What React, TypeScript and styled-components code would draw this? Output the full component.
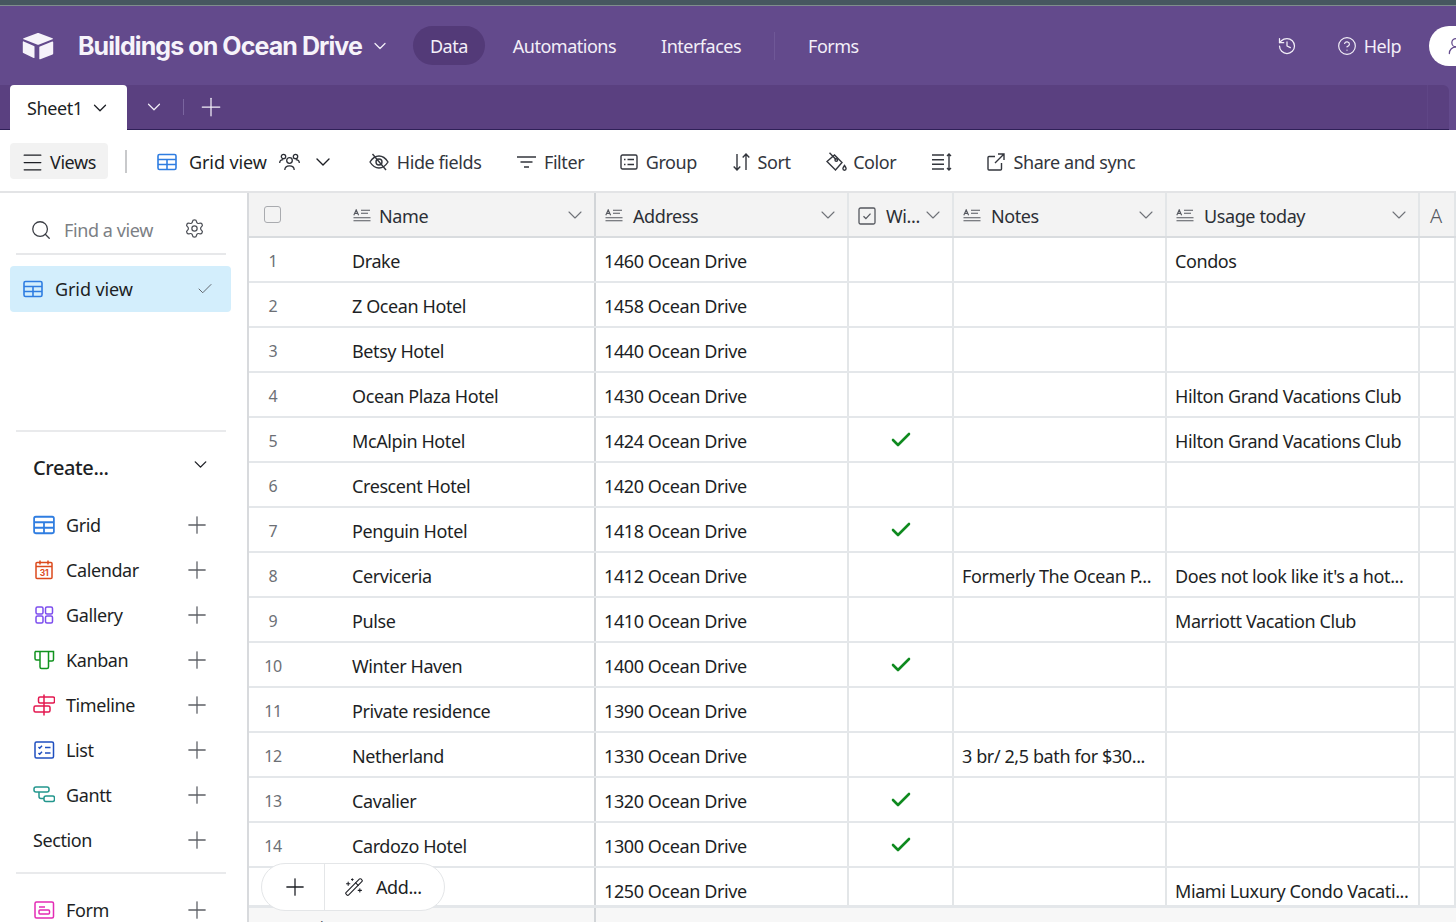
import React from 'react';
import styled, { createGlobalStyle } from 'styled-components';
import {
  Check,
  ChevronDown,
  CircleHelp,
  History,
  Menu,
  Plus,
  Search,
  Settings,
  UserRound,
  WandSparkles,
} from 'lucide-react';

type Row = {
  name: string;
  address: string;
  checked?: boolean;
  notes?: string;
  usage?: string;
};

const rows: Row[] = [
  { name: 'Drake', address: '1460 Ocean Drive', usage: 'Condos' },
  { name: 'Z Ocean Hotel', address: '1458 Ocean Drive' },
  { name: 'Betsy Hotel', address: '1440 Ocean Drive' },
  { name: 'Ocean Plaza Hotel', address: '1430 Ocean Drive', usage: 'Hilton Grand Vacations Club' },
  { name: 'McAlpin Hotel', address: '1424 Ocean Drive', checked: true, usage: 'Hilton Grand Vacations Club' },
  { name: 'Crescent Hotel', address: '1420 Ocean Drive' },
  { name: 'Penguin Hotel', address: '1418 Ocean Drive', checked: true },
  { name: 'Cerviceria', address: '1412 Ocean Drive', notes: 'Formerly The Ocean P...', usage: "Does not look like it's a hot..." },
  { name: 'Pulse', address: '1410 Ocean Drive', usage: 'Marriott Vacation Club' },
  { name: 'Winter Haven', address: '1400 Ocean Drive', checked: true },
  { name: 'Private residence', address: '1390 Ocean Drive' },
  { name: 'Netherland', address: '1330 Ocean Drive', notes: '3 br/ 2,5 bath for $30...' },
  { name: 'Cavalier', address: '1320 Ocean Drive', checked: true },
  { name: 'Cardozo Hotel', address: '1300 Ocean Drive', checked: true },
  { name: '', address: '1250 Ocean Drive', usage: 'Miami Luxury Condo Vacati...' },
];

const GlobalStyle = createGlobalStyle`
  html, body {
    margin: 0;
    background: #fff;
  }
  body {
    font-family: "Noto Sans", "Open Sans", sans-serif;
    color: #1d1f25;
  }
`;

const Page = styled.div`
  width: 1456px;
  height: 922px;
  overflow: hidden;
  display: flex;
  flex-direction: column;
`;

const TopStrip = styled.div`
  height: 5px;
  background: #46575f;
  border-bottom: 1px solid #7f8d8d;
`;

const Header = styled.header`
  height: 79px;
  flex: none;
  background: #634a8c;
  display: flex;
  align-items: center;
  color: #f3eff8;
  font-size: 18px;
  letter-spacing: -0.5px;
`;

const Logo = styled.svg`
  width: 32px;
  height: 28px;
  margin-left: 22px;
  flex: none;
`;

const Title = styled.h1`
  margin: 0 0 0 24px;
  font: 700 25px Inter, sans-serif;
  letter-spacing: -0.92px;
  color: #f6f3fa;
  white-space: nowrap;
`;

const TitleCaret = styled.span`
  display: flex;
  margin: 0 23px 0 8px;
`;

const NavItem = styled.a<{ $active?: boolean }>`
  height: 39px;
  display: flex;
  align-items: center;
  padding: 0 17px;
  margin-right: 11px;
  border-radius: 20px;
  background: ${(p) => (p.$active ? '#533a78' : 'transparent')};
  white-space: nowrap;
`;

const NavDivider = styled.span`
  width: 1px;
  height: 28px;
  background: #6f5897;
  margin: 0 16px 0 5px;
`;

const HeaderRight = styled.div`
  margin-left: auto;
  display: flex;
  align-items: center;
  flex: none;
`;

const HelpLink = styled.a`
  display: flex;
  align-items: center;
  gap: 7px;
  margin: 0 28px 0 40px;
`;

const AccountPill = styled.div`
  width: 60px;
  height: 40px;
  margin-right: -33px;
  border-radius: 20px 0 0 20px;
  background: #fff;
  color: #634a8c;
  display: flex;
  align-items: center;
  padding-left: 17px;
  box-sizing: border-box;
  flex: none;
`;

const TabRow = styled.div`
  height: 45px;
  flex: none;
  background: #634a8c;
  display: flex;
`;

const TabStrip = styled.div`
  width: 1449px;
  display: flex;
  align-items: center;
  background: #5a4080;
  border-bottom: 1px solid #2f2058;
  border-radius: 0 6px 0 0;
  box-sizing: border-box;
  color: #f3eff8;
`;

const ActiveTab = styled.div`
  width: 117px;
  height: 45px;
  margin: 0 0 -1px 10px;
  padding-left: 17px;
  box-sizing: border-box;
  display: flex;
  align-items: center;
  gap: 6px;
  background: #fff;
  color: #1d1f25;
  border-radius: 4px 4px 0 0;
  font-size: 18px;
  letter-spacing: -0.4px;
`;

const TabCaret = styled.span`
  display: flex;
  margin-left: 16px;
`;

const TabDivider = styled.span`
  width: 1px;
  height: 16px;
  background: #7a659f;
  margin: 0 12px 0 18px;
`;

const TabEndLine = styled.span`
  width: 1px;
  height: 100%;
  margin: 0 21px 0 auto;
  background: #5f4686;
`;

const Toolbar = styled.div`
  height: 63px;
  flex: none;
  box-sizing: border-box;
  border-bottom: 2px solid #e3e4e6;
  display: flex;
  align-items: center;
  padding: 3px 0 0 10px;
  font-size: 18px;
  letter-spacing: -0.42px;
  color: #33363d;
`;

const ViewsButton = styled.div`
  width: 98px;
  height: 36px;
  margin-top: -2px;
  padding: 2px 0 0 10px;
  border-radius: 4px;
  background: #f2f2f2;
  display: flex;
  align-items: center;
  gap: 5px;
  box-sizing: border-box;
  color: #1d1f25;
`;

const ToolDivider = styled.span`
  width: 2px;
  height: 23px;
  margin-top: -2px;
  background: #c8c9cb;
  margin-left: 17px;
  margin-right: 30px;
`;

const ViewPicker = styled.div`
  display: flex;
  align-items: center;
  color: #1d1f25;
  margin-right: 34px;
`;

const ViewName = styled.span`
  margin: 0 12px 0 12px;
  letter-spacing: -0.1px;
`;

const ViewCaret = styled.span`
  display: flex;
  margin-left: 11px;
`;

const ToolGroup = styled.div`
  display: flex;
  align-items: center;
  gap: 35.6px;
`;

const Tool = styled.div<{ $gap?: number }>`
  display: flex;
  align-items: center;
  gap: ${(p) => p.$gap ?? 8}px;
  white-space: nowrap;
`;

const Body = styled.div`
  flex: 1;
  display: flex;
  min-height: 0;
`;

const Sidebar = styled.aside`
  width: 249px;
  flex: none;
  box-sizing: border-box;
  border-right: 2px solid #d8dadd;
  padding: 0 21px 0 16px;
  display: flex;
  flex-direction: column;
  font-size: 18px;
  letter-spacing: -0.4px;
`;

const SearchRow = styled.div`
  height: 62px;
  flex: none;
  box-sizing: border-box;
  border-bottom: 2px solid #e7e8ea;
  display: flex;
  align-items: center;
  padding: 14px 0 0 14px;
  gap: 12px;
  color: #7c7f85;
`;

const SearchGear = styled.span`
  display: flex;
  margin: -3px 0 0 auto;
  padding-right: 21px;
  color: #4c4f56;
`;

const SelectedView = styled.div`
  height: 46px;
  flex: none;
  margin: 11px -5px 0 -6px;
  padding: 0 17px 0 13px;
  border-radius: 4px;
  background: #d3eefc;
  display: flex;
  align-items: center;
  gap: 12px;
  letter-spacing: -0.1px;
`;

const SelectedCheck = styled.span`
  display: flex;
  margin-left: auto;
  color: #55585f;
`;

const SideDivider = styled.div<{ $top: number }>`
  height: 2px;
  flex: none;
  background: #e9eaec;
  margin-top: ${(p) => p.$top}px;
`;

const CreateHeader = styled.div`
  height: 70px;
  flex: none;
  display: flex;
  align-items: center;
  justify-content: space-between;
  padding: 0 15px 0 17px;
  font-size: 20px;
  font-weight: 500;
  box-sizing: border-box;
`;

const CreateCaret = styled.span`
  display: flex;
  margin-top: -6px;
`;

const CreateList = styled.div`
  display: flex;
  flex-direction: column;
`;

const CreateItem = styled.div`
  height: 45px;
  flex: none;
  display: flex;
  align-items: center;
  padding: 0 18px;
  gap: 11px;
`;

const ItemIcon = styled.svg`
  width: 22px;
  height: 22px;
  flex: none;
  margin-left: -1px;
`;

const ItemSlot = styled.span`
  display: flex;
  flex: none;
  margin-left: -1px;
`;

const ItemPlus = styled.span`
  display: flex;
  margin-left: auto;
  margin-right: -3px;
  color: #5d6066;
`;

const FormItem = styled(CreateItem)`
  margin-top: 13px;
`;

const SectionLabel = styled.span`
  margin-left: -1px;
`;

const GridArea = styled.main`
  position: relative;
  flex: 1;
  min-width: 0;
  display: flex;
  flex-direction: column;
  font-size: 18px;
  letter-spacing: -0.4px;
`;

const GridRow = styled.div`
  display: grid;
  grid-template-columns: 347px 253px 105px 213px 253px 1fr;
  height: 45px;
  flex: none;
  box-sizing: border-box;
  border-bottom: 2px solid #e4e7ea;
`;

const HeaderRow = styled(GridRow)`
  background: #f3f3f3;
  border-bottom-color: #d9dcdf;
  color: #2c2f36;
  border-top: 0;
`;

const LastRow = styled(GridRow)`
  height: 39px;
`;

const Cell = styled.div`
  box-sizing: border-box;
  border-right: 2px solid #e3e6e8;
  padding: 0 8px;
  display: flex;
  align-items: flex-start;
  line-height: 46px;
  min-width: 0;
  white-space: nowrap;
  overflow: hidden;
`;

const PrimaryCell = styled(Cell)`
  padding: 0;
  border-right-color: #d2d5d8;
`;

const CheckCell = styled(Cell)`
  justify-content: center;
  align-items: center;
  color: #0f8a1f;
`;

const RowNumber = styled.span`
  width: 48px;
  margin-right: 55px;
  flex: none;
  text-align: center;
  font-size: 16px;
  letter-spacing: -0.3px;
  color: #6c6f75;
`;

const HeadCell = styled(Cell)`
  align-items: center;
  line-height: normal;
  padding: 2px 7px 0 9px;
  gap: 10px;
`;

const PrimaryHead = styled(HeadCell)`
  padding-left: 15px;
  gap: 0;
  border-right-color: #d2d5d8;
`;

const HeadBox = styled.span`
  width: 15px;
  height: 15px;
  margin-top: -2px;
  border: 1.5px solid #a9abaf;
  border-radius: 3px;
  margin-right: 72px;
  flex: none;
`;

const HeadLabel = styled.span`
  flex: 1;
  min-width: 0;
`;

const PrimaryLabel = styled(HeadLabel)`
  margin-left: 8px;
`;

const HeadCaret = styled.span`
  display: flex;
  color: #6f7278;
  margin-top: -2px;
`;

const ClippedLetter = styled.span`
  font-size: 20px;
  font-weight: 300;
  color: #55585f;
  padding-left: 2px;
`;

const LastHead = styled(HeadCell)`
  padding-left: 8px;
`;

const Footer = styled.div`
  flex: 1;
  background: #f7f7f7;
  border-top: 1px solid #e4e7ea;
  display: grid;
  grid-template-columns: 347px 1fr;
`;

const FooterCount = styled.div`
  box-sizing: border-box;
  border-right: 2px solid #d2d5d8;
  padding: 8px 0 0 11px;
  font-size: 15px;
  color: #55585f;
  line-height: 20px;
`;

const FloatingAdd = styled.div`
  position: absolute;
  left: 12px;
  top: 670px;
  width: 184px;
  height: 48px;
  box-sizing: border-box;
  border: 1.5px solid #e4e6e8;
  border-radius: 24px;
  background: #fff;
  display: flex;
  align-items: center;
`;

const FloatingPlus = styled.span`
  width: 63px;
  height: 100%;
  flex: none;
  box-sizing: border-box;
  border-right: 1.5px solid #e4e6e8;
  display: flex;
  align-items: center;
  justify-content: center;
  padding-left: 4px;
`;

const FloatingLabel = styled.span`
  display: flex;
  align-items: center;
  gap: 12px;
  padding-left: 19px;
`;

const GridGlyph = ({ color = '#2f7de1', size = 20 }: { color?: string; size?: number }) => (
  <svg width={size} height={size} viewBox="0 0 20 20" fill="none" stroke={color} strokeWidth="1.6">
    <rect x="1" y="2.5" width="18" height="15" rx="1.5" />
    <path d="M1 7.5h18M1 12.5h18M10 7.5v10" />
  </svg>
);

const TextFieldIcon = () => (
  <svg width="18" height="14" viewBox="0 0 18 14" fill="none" stroke="#55585f" strokeWidth="1.1" style={{ flex: 'none' }}>
    <path d="M.8 6.2 3.2.8l2.400 5.400M1.700 4.400h3M8 1.200h9M8 4.200h7M.5 8.700h17M.5 11.700h17" />
  </svg>
);

const CheckFieldIcon = () => (
  <svg width="18" height="18" viewBox="0 0 18 18" fill="none" stroke="#55585f" strokeWidth="1.3" style={{ flex: 'none' }}>
    <rect x="1" y="1" width="16" height="16" rx="1.5" />
    <path d="m5.500 9.200 2.400 2.400 4.600-5" />
  </svg>
);

const PeopleIcon = () => (
  <svg width="21" height="18" viewBox="0 0 21 18" fill="none" stroke="#2b2e35" strokeWidth="1.3">
    <circle cx="10.500" cy="7.500" r="2.800" />
    <path d="M5.800 17c0-3 1.800-4.200 4.700-4.200s4.700 1.200 4.700 4.200" />
    <circle cx="4.500" cy="3.500" r="2.200" />
    <path d="M.7 10c0-2 1.200-3.400 3.600-3.400" />
    <circle cx="16.500" cy="3.500" r="2.200" />
    <path d="M20.300 10c0-2-1.200-3.400-3.600-3.400" />
  </svg>
);

const HideIcon = () => (
  <svg width="20" height="18" viewBox="0 0 20 18" fill="none" stroke="#33363d" strokeWidth="1.4">
    <path d="M1 9c2.500-4 5.500-6 9-6s6.500 2 9 6c-2.500 4-5.500 6-9 6s-6.500-2-9-6z" />
    <circle cx="10" cy="9" r="3" />
    <path d="M3.500 1 17 17" />
  </svg>
);

const FilterIcon = () => (
  <svg width="19" height="14" viewBox="0 0 19 14" fill="none" stroke="#33363d" strokeWidth="1.5">
    <path d="M0 2h19M3.500 7h12M7 12h5" />
  </svg>
);

const GroupIcon = () => (
  <svg width="18" height="16" viewBox="0 0 18 16" fill="none" stroke="#33363d" strokeWidth="1.4">
    <rect x="1" y="1" width="16" height="14" rx="1.5" />
    <path d="M4 5.500h1.500M4 10.500h1.500M7.500 5.500H14M7.500 10.500H14" />
  </svg>
);

const SortIcon = () => (
  <svg width="17" height="18" viewBox="0 0 17 18" fill="none" stroke="#33363d" strokeWidth="1.4">
    <path d="M4 1v16M.7 13.500 4 17l3.300-3.500M13 17V1M9.700 4.500 13 1l3.300 3.500" />
  </svg>
);

const ColorIcon = () => (
  <svg width="21" height="20" viewBox="0 0 21 20" fill="none" stroke="#33363d" strokeWidth="1.4">
    <path d="M1 9.500 8.500 3l7.500 7.500-6.500 7.500z" />
    <path d="M3.500 .7 10 7.500" />
    <circle cx="10.300" cy="8" r="1.300" />
    <path d="M18.500 13.500c1 1.400 1.600 2.300 1.600 3.100a1.600 1.600 0 0 1-3.200 0c0-.8.600-1.700 1.600-3.100z" />
  </svg>
);

const RowHeightIcon = () => (
  <svg width="20" height="18" viewBox="0 0 20 18" fill="none" stroke="#33363d" strokeWidth="1.4">
    <path d="M0 2h12M0 6.700h12M0 11.300h12M0 16h12M17 1v16M15 3l2-2 2 2M15 15l2 2 2-2" />
  </svg>
);

const ShareIcon = () => (
  <svg width="18" height="18" viewBox="0 0 18 18" fill="none" stroke="#33363d" strokeWidth="1.4">
    <path d="M8 3.500H2c-.6 0-1 .400-1 1V16c0 .600.400 1 1 1h11.500c.6 0 1-.4 1-1v-6" />
    <path d="M11 1h6v6M17 1 8 10" />
  </svg>
);

const AppLogo = () => (
  <Logo viewBox="0 0 32 28" fill="#f6f3fa">
    <path d="M15 1.200 1.600 6.200c-.6.300-.6.900 0 1.100L15 12.400c.8.300 1.400.3 2.200 0l13.300-5.100c.6-.2.600-.8 0-1.100L17.200 1.200c-.8-.3-1.400-.3-2.200 0z" />
    <path d="M17.300 15.300v11.400c0 .5.500.8 1 .6l12.300-4.800c.4-.2.600-.5.600-.9V10.200c0-.5-.5-.8-1-.6l-12.300 4.800c-.4.200-.6.500-.6.900z" />
    <path d="M.8 9.900v10.300c0 .4.200.7.500.9L11.600 26c.4.200.9 0 .9-.5V14.800c0-.4-.2-.7-.5-.9L1.700 9.400c-.4-.2-.9 0-.9.500z" />
  </Logo>
);

const CalendarIcon = () => (
  <ItemIcon viewBox="0 0 22 22" fill="none" stroke="#dc4a1c" strokeWidth="1.5">
    <rect x="3" y="3.500" width="16" height="16" rx="1" />
    <path d="M3 7.500h16M7 1.500v4M15 1.500v4" />
    <text x="11" y="17" textAnchor="middle" fontSize="8.500" fontWeight="700" fill="#dc4a1c" stroke="none" fontFamily="Inter, sans-serif">
      31
    </text>
  </ItemIcon>
);

const GalleryIcon = () => (
  <ItemIcon viewBox="0 0 22 22" fill="none" stroke="#7c4dee" strokeWidth="1.5">
    <rect x="3" y="3" width="7" height="7" rx="1.500" />
    <rect x="12.500" y="3" width="7" height="7" rx="1.500" />
    <rect x="3" y="12" width="7" height="7" rx="1.500" />
    <rect x="12.500" y="12" width="7" height="7" rx="1.500" />
  </ItemIcon>
);

const KanbanIcon = () => (
  <ItemIcon viewBox="0 0 22 22" fill="none" stroke="#11931f" strokeWidth="1.500">
    <path d="M2 2.500h18.500v8c0 .8-.6 1.500-1.500 1.500h-3.500M2 2.500v7c0 .8.600 1.500 1.500 1.500H7M7 2.500V18c0 .8.600 1.500 1.500 1.500h5.500c.8 0 1.500-.7 1.500-1.500V2.500" />
  </ItemIcon>
);

const TimelineIcon = () => (
  <ItemIcon viewBox="0 0 22 22" fill="none" stroke="#e3174f" strokeWidth="1.500">
    <path d="M11 .5v21" />
    <rect x="5.500" y="3" width="16" height="6" rx="1.500" />
    <rect x="1" y="12" width="16" height="6" rx="1.500" />
  </ItemIcon>
);

const ListIcon = () => (
  <ItemIcon viewBox="0 0 22 22" fill="none" stroke="#1f4fc0" strokeWidth="1.500">
    <rect x="2" y="3" width="18.500" height="16" rx="1.500" />
    <path d="m5.500 8 1.200 1.200L9 6.800M5.500 14l1.200 1.200L9 12.800M12 8.500h5.500M12 14h5.500" />
  </ItemIcon>
);

const GanttIcon = () => (
  <ItemIcon viewBox="0 0 22 22" fill="none" stroke="#23968d" strokeWidth="1.500">
    <rect x="1" y="3" width="15" height="5" rx="2" />
    <rect x="11" y="12" width="10.500" height="5.500" rx="2" />
    <path d="M6 8v4.500c0 1 .600 2 2 2h3" />
  </ItemIcon>
);

const FormIcon = () => (
  <ItemIcon viewBox="0 0 22 22" fill="none" stroke="#e32bb5" strokeWidth="1.500">
    <rect x="2" y="3" width="18.500" height="16" rx="1.500" />
    <path d="M6 8h6" />
    <rect x="6" y="11" width="10.500" height="4" rx="1" />
  </ItemIcon>
);

const createItems: { label: string; icon: React.ReactNode }[] = [
  { label: 'Grid', icon: <ItemSlot><GridGlyph size={22} /></ItemSlot> },
  { label: 'Calendar', icon: <CalendarIcon /> },
  { label: 'Gallery', icon: <GalleryIcon /> },
  { label: 'Kanban', icon: <KanbanIcon /> },
  { label: 'Timeline', icon: <TimelineIcon /> },
  { label: 'List', icon: <ListIcon /> },
  { label: 'Gantt', icon: <GanttIcon /> },
];

const tools: { label: string; icon: React.ReactNode; gap?: number }[] = [
  { label: 'Hide fields', icon: <HideIcon /> },
  { label: 'Filter', icon: <FilterIcon /> },
  { label: 'Group', icon: <GroupIcon /> },
  { label: 'Sort', icon: <SortIcon /> },
  { label: 'Color', icon: <ColorIcon />, gap: 6 },
  { label: '', icon: <RowHeightIcon /> },
  { label: 'Share and sync', icon: <ShareIcon /> },
];

const columns = [
  { label: 'Address', icon: <TextFieldIcon /> },
  { label: 'Wi...', icon: <CheckFieldIcon /> },
  { label: 'Notes', icon: <TextFieldIcon /> },
  { label: 'Usage today', icon: <TextFieldIcon /> },
];

const RowCells = ({ row, index }: { row: Row; index: number }) => (
  <>
    <PrimaryCell>
      {index < 14 && <RowNumber>{index + 1}</RowNumber>}
      {row.name}
    </PrimaryCell>
    <Cell>{row.address}</Cell>
    <CheckCell>{row.checked && <Check size={24} strokeWidth={2.6} />}</CheckCell>
    <Cell>{row.notes}</Cell>
    <Cell>{row.usage}</Cell>
    <Cell />
  </>
);

const AddPlus = () => <Plus size={28} strokeWidth={1.1} />;

export default function App() {
  return (
    <Page>
      <GlobalStyle />
      <TopStrip />
      <Header>
        <AppLogo />
        <Title>Buildings on Ocean Drive</Title>
        <TitleCaret>
          <ChevronDown size={20} strokeWidth={1.5} />
        </TitleCaret>
        <NavItem $active>Data</NavItem>
        <NavItem>Automations</NavItem>
        <NavItem>Interfaces</NavItem>
        <NavDivider />
        <NavItem>Forms</NavItem>
        <HeaderRight>
          <History size={20} strokeWidth={1.5} />
          <HelpLink>
            <CircleHelp size={20} strokeWidth={1.4} />
            Help
          </HelpLink>
          <AccountPill>
            <UserRound size={20} strokeWidth={1.5} />
          </AccountPill>
        </HeaderRight>
      </Header>
      <TabRow>
        <TabStrip>
          <ActiveTab>
            Sheet1
            <ChevronDown size={22} strokeWidth={1.4} />
          </ActiveTab>
          <TabCaret>
            <ChevronDown size={22} strokeWidth={1.3} />
          </TabCaret>
          <TabDivider />
          <Plus size={30} strokeWidth={1} />
          <TabEndLine />
        </TabStrip>
      </TabRow>
      <Toolbar>
        <ViewsButton>
          <Menu size={25} strokeWidth={1.2} />
          Views
        </ViewsButton>
        <ToolDivider />
        <ViewPicker>
          <GridGlyph />
          <ViewName>Grid view</ViewName>
          <PeopleIcon />
          <ViewCaret>
            <ChevronDown size={24} strokeWidth={1.4} />
          </ViewCaret>
        </ViewPicker>
        <ToolGroup>
          {tools.map((tool) => (
            <Tool key={tool.label || 'row-height'} $gap={tool.gap}>
              {tool.icon}
              {tool.label && <span>{tool.label}</span>}
            </Tool>
          ))}
        </ToolGroup>
      </Toolbar>
      <Body>
        <Sidebar>
          <SearchRow>
            <Search size={22} strokeWidth={1.4} color="#3b3e45" />
            Find a view
            <SearchGear>
              <Settings size={21} strokeWidth={1.4} />
            </SearchGear>
          </SearchRow>
          <SelectedView>
            <GridGlyph />
            Grid view
            <SelectedCheck>
              <Check size={18} strokeWidth={1.2} />
            </SelectedCheck>
          </SelectedView>
          <SideDivider $top={118} />
          <CreateHeader>
            Create...
            <CreateCaret>
              <ChevronDown size={21} strokeWidth={1.6} />
            </CreateCaret>
          </CreateHeader>
          <CreateList>
            {createItems.map((item) => (
              <CreateItem key={item.label}>
                {item.icon}
                {item.label}
                <ItemPlus>
                  <AddPlus />
                </ItemPlus>
              </CreateItem>
            ))}
            <CreateItem>
              <SectionLabel>Section</SectionLabel>
              <ItemPlus>
                <AddPlus />
              </ItemPlus>
            </CreateItem>
          </CreateList>
          <SideDivider $top={10} />
          <FormItem>
            <FormIcon />
            Form
            <ItemPlus>
              <AddPlus />
            </ItemPlus>
          </FormItem>
        </Sidebar>
        <GridArea>
          <HeaderRow>
            <PrimaryHead>
              <HeadBox />
              <TextFieldIcon />
              <PrimaryLabel>Name</PrimaryLabel>
              <HeadCaret>
                <ChevronDown size={24} strokeWidth={1.1} />
              </HeadCaret>
            </PrimaryHead>
            {columns.map((col) => (
              <HeadCell key={col.label}>
                {col.icon}
                <HeadLabel>{col.label}</HeadLabel>
                <HeadCaret>
                  <ChevronDown size={24} strokeWidth={1.1} />
                </HeadCaret>
              </HeadCell>
            ))}
            <LastHead>
              <ClippedLetter>A</ClippedLetter>
            </LastHead>
          </HeaderRow>
          {rows.slice(0, 14).map((row, i) => (
            <GridRow key={row.address}>
              <RowCells row={row} index={i} />
            </GridRow>
          ))}
          <LastRow>
            <RowCells row={rows[14]} index={14} />
          </LastRow>
          <Footer>
            <FooterCount>84 records</FooterCount>
          </Footer>
          <FloatingAdd>
            <FloatingPlus>
              <AddPlus />
            </FloatingPlus>
            <FloatingLabel>
              <WandSparkles size={20} strokeWidth={1.3} />
              Add...
            </FloatingLabel>
          </FloatingAdd>
        </GridArea>
      </Body>
    </Page>
  );
}
